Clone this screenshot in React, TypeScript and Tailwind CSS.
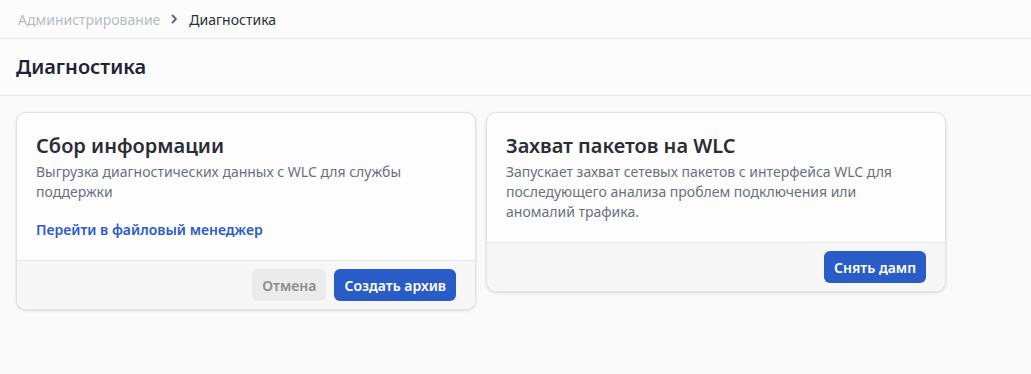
interface CardProps {
    title: string
    text: string
    link?: string
    children: React.ReactNode
}

const Card: React.FC<CardProps> = ({ title, text, link, children }) => {
    return (
        <div className="w-[460px] rounded-[10px] border border-[#e2e2e4] bg-[#fdfdfd] shadow-[0_1px_3px_rgba(0,0,0,0.12)] overflow-hidden">
            <div className="px-[19px] pt-[19px] pb-[20px]">
                <h2 className="text-[20px] leading-[28px] font-semibold text-[#2a2d35]">{title}</h2>
                <p className="mt-[2px] text-[14px] leading-[20px] text-[#6b7080]">{text}</p>
                {link && <a className="block mt-[18px] text-[14px] leading-[20px] font-semibold text-[#2a5cc7]">{link}</a>}
            </div>
            <div className="flex justify-end gap-2 border-t border-[#e8e8ea] bg-[#f7f7f8] pl-[18px] pr-[19px] py-2">
                {children}
            </div>
        </div>
    )
}

export default function App() {
    return (
        <div className="min-h-[374px] bg-[#fafafa] font-['Noto_Sans',sans-serif]">
            <div className="flex items-center h-[39px] px-[18px] border-b border-[#e6e6e8] text-[14px] bg-[#fcfcfc]">
                <span className="text-[#b7bbc5]">Администрирование</span>
                <svg className="mx-[11px] w-[7px] h-[10px] text-[#5f6470]" viewBox="0 0 7 10" fill="none">
                    <path d="M1.5 1.5 L5 5 L1.5 8.5" stroke="currentColor" strokeWidth="1.8" strokeLinecap="round" strokeLinejoin="round" />
                </svg>
                <span className="text-[#2b2f36]">Диагностика</span>
            </div>
            <div className="flex items-center h-[57px] px-4 border-b border-[#e6e6e8] bg-[#fcfcfc]">
                <h1 className="text-[20px] font-semibold text-[#1f2336]">Диагностика</h1>
            </div>
            <div className="flex items-start gap-[10px] px-4 pt-4">
                <Card
                    title="Сбор информации"
                    text="Выгрузка диагностических данных с WLC для службы поддержки"
                    link="Перейти в файловый менеджер"
                >
                    <button className="h-8 px-[10px] rounded-md bg-[#ebebeb] text-[14px] font-semibold text-[#8c8c8c]">Отмена</button>
                    <button className="h-8 px-[10px] rounded-md bg-[#2a5cc7] text-[14px] font-semibold text-white">Создать архив</button>
                </Card>
                <Card
                    title="Захват пакетов на WLC"
                    text="Запускает захват сетевых пакетов с интерфейса WLC для последующего анализа проблем подключения или аномалий трафика."
                >
                    <button className="h-8 px-[10px] rounded-md bg-[#2a5cc7] text-[14px] font-semibold text-white">Снять дамп</button>
                </Card>
            </div>
        </div>
    )
}
